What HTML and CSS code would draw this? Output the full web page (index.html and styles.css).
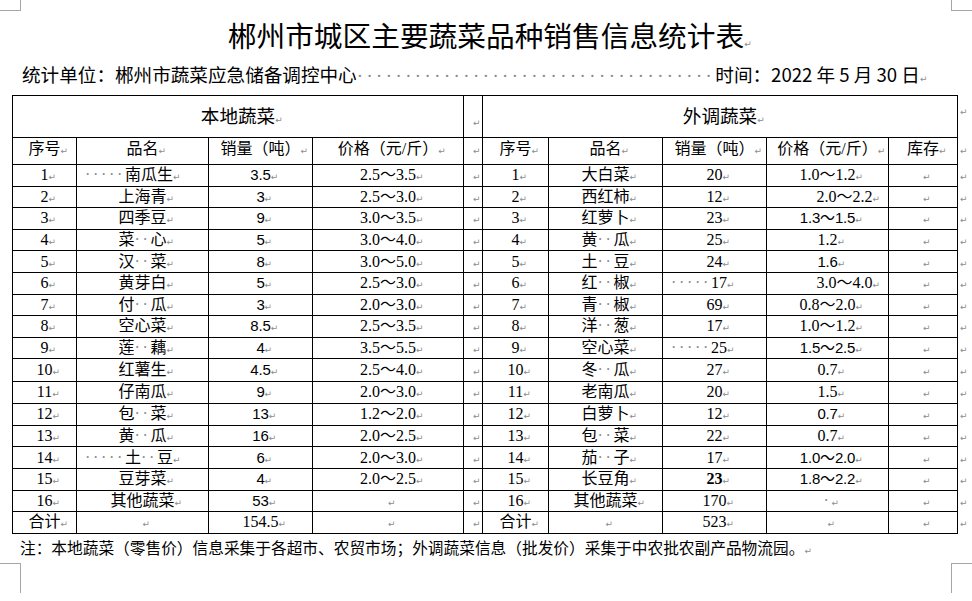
FILE: index.html
```html
<!DOCTYPE html>
<html lang="zh-CN">
<head>
<meta charset="utf-8">
<title>郴州市城区主要蔬菜品种销售信息统计表</title>
<link rel="stylesheet" href="styles.css">
</head>
<body>
<div class="page">
  <span class="corner tl"></span><span class="corner tr"></span><span class="corner bl"></span><span class="corner br"></span>
  <h1 class="title">郴州市城区主要蔬菜品种销售信息统计表</h1>
  <div class="sub"><span class="sub-l">统计单位：郴州市蔬菜应急储备调控中心</span><span class="fill">·····································</span><span class="sub-r">时间：2022 年 5 月 30 日</span></div>
  <table class="tbl">
    <colgroup>
      <col class="c1"><col class="c2"><col class="c3"><col class="c4"><col class="c5">
      <col class="c6"><col class="c7"><col class="c8"><col class="c9"><col class="c10"><col class="c11">
    </colgroup>
    <tr class="h1"><td colspan="4" class="big">本地蔬菜</td><td class="sepc"></td><td colspan="5" class="big">外调蔬菜</td><td class="end top"></td></tr>
    <tr class="h2"><td>序号</td><td>品名</td><td>销量（吨）</td><td>价格（元/斤）</td><td></td><td>序号</td><td>品名</td><td>销量（吨）</td><td>价格（元/斤）</td><td>库存</td><td class="end"></td></tr>
    <tr><td>1</td><td class="pl"><span class="d">·····</span>南瓜生</td><td class="ss">3.5</td><td>2.5～3.5</td><td></td><td>1</td><td>大白菜</td><td>20</td><td>1.0～1.2</td><td></td><td class="end"></td></tr>
    <tr><td>2</td><td>上海青</td><td class="ss">3</td><td>2.5～3.0</td><td></td><td>2</td><td>西红柿</td><td>12</td><td class="pr">2.0～2.2</td><td></td><td class="end"></td></tr>
    <tr><td>3</td><td>四季豆</td><td class="ss">9</td><td>3.0～3.5</td><td></td><td>3</td><td>红萝卜</td><td>23</td><td class="ss">1.3～1.5</td><td></td><td class="end"></td></tr>
    <tr><td>4</td><td>菜<span class="d">··</span>心</td><td class="ss">5</td><td>3.0～4.0</td><td></td><td>4</td><td>黄<span class="d">··</span>瓜</td><td>25</td><td>1.2</td><td></td><td class="end"></td></tr>
    <tr><td>5</td><td>汉<span class="d">··</span>菜</td><td class="ss">8</td><td>3.0～5.0</td><td></td><td>5</td><td>土<span class="d">··</span>豆</td><td>24</td><td class="ss">1.6</td><td></td><td class="end"></td></tr>
    <tr><td>6</td><td>黄芽白</td><td class="ss">5</td><td>2.5～3.0</td><td></td><td>6</td><td>红<span class="d">··</span>椒</td><td class="pq"><span class="d">·····</span>17</td><td class="pr">3.0～4.0</td><td></td><td class="end"></td></tr>
    <tr><td>7</td><td>付<span class="d">··</span>瓜</td><td class="ss">3</td><td>2.0～3.0</td><td></td><td>7</td><td>青<span class="d">··</span>椒</td><td>69</td><td>0.8～2.0</td><td></td><td class="end"></td></tr>
    <tr><td>8</td><td>空心菜</td><td class="ss">8.5</td><td>2.5～3.5</td><td></td><td>8</td><td>洋<span class="d">··</span>葱</td><td>17</td><td>1.0～1.2</td><td></td><td class="end"></td></tr>
    <tr><td>9</td><td>莲<span class="d">··</span>藕</td><td class="ss">4</td><td>3.5～5.5</td><td></td><td>9</td><td>空心菜</td><td class="pq"><span class="d">·····</span>25</td><td class="ss">1.5～2.5</td><td></td><td class="end"></td></tr>
    <tr class="tall"><td>10</td><td>红薯生</td><td class="ss">4.5</td><td>2.5～4.0</td><td></td><td>10</td><td>冬<span class="d">··</span>瓜</td><td>27</td><td>0.7</td><td></td><td class="end"></td></tr>
    <tr class="tall"><td>11</td><td>仔南瓜</td><td class="ss">9</td><td>2.0～3.0</td><td></td><td>11</td><td>老南瓜</td><td>20</td><td>1.5</td><td></td><td class="end"></td></tr>
    <tr><td>12</td><td>包<span class="d">··</span>菜</td><td class="ss">13</td><td>1.2～2.0</td><td></td><td>12</td><td>白萝卜</td><td>12</td><td class="ss">0.7</td><td></td><td class="end"></td></tr>
    <tr><td>13</td><td>黄<span class="d">··</span>瓜</td><td class="ss">16</td><td>2.0～2.5</td><td></td><td>13</td><td>包<span class="d">··</span>菜</td><td>22</td><td>0.7</td><td></td><td class="end"></td></tr>
    <tr><td>14</td><td class="pl"><span class="d">·····</span>土<span class="d">··</span>豆</td><td class="ss">6</td><td>2.0～3.0</td><td></td><td>14</td><td>茄<span class="d">··</span>子</td><td>17</td><td class="ss">1.0～2.0</td><td></td><td class="end"></td></tr>
    <tr><td>15</td><td>豆芽菜</td><td class="ss">4</td><td>2.0～2.5</td><td></td><td>15</td><td>长豆角</td><td><b>23</b></td><td class="ss">1.8～2.2</td><td></td><td class="end"></td></tr>
    <tr><td>16</td><td>其他蔬菜</td><td class="ss">53</td><td></td><td></td><td>16</td><td>其他蔬菜</td><td>170</td><td><span class="d">·</span></td><td></td><td class="end"></td></tr>
    <tr><td>合计</td><td></td><td>154.5</td><td></td><td></td><td>合计</td><td></td><td>523</td><td></td><td></td><td class="end"></td></tr>
  </table>
  <p class="note">注：本地蔬菜（零售价）信息采集于各超市、农贸市场；外调蔬菜信息（批发价）采集于中农批农副产品物流园。</p>
</div>
</body>
</html>
```

FILE: styles.css
```css
* { box-sizing: border-box; }
html, body { margin: 0; padding: 0; background: #fff; }
body {
  width: 972px;
  height: 601px;
  overflow: hidden;
  position: relative;
  font-family: "Noto Sans CJK SC", sans-serif;
  color: #000;
}
.page { padding-top: 14px; }

/* page crop marks */
.corner { position: absolute; width: 21px; border: 0 solid #a6a6a6; }
.corner.tl { left: 0; top: 0; height: 11px; border-right-width: 1px; border-bottom-width: 1px; }
.corner.tr { left: 951px; top: 0; height: 11px; border-left-width: 1px; border-bottom-width: 1px; }
.corner.bl { left: 0; top: 563px; height: 30px; border-right-width: 1px; border-top-width: 1px; }
.corner.br { left: 951px; top: 563px; height: 30px; border-left-width: 1px; border-top-width: 1px; }

/* paragraph marks */
.title::after, .sub::after, .note::after, .tbl td::after {
  content: "↵";
  display: inline-block;
  width: 0;
  font-family: "DejaVu Sans", sans-serif;
  font-size: 9px;
  line-height: 1;
  font-weight: normal;
  color: #8c8c8c;
  white-space: nowrap;
  letter-spacing: 0;
}

.title {
  margin: 0;
  height: 42px;
  font-size: 28.7px;
  font-weight: normal;
  line-height: 42px;
  text-align: center;
}

.sub {
  display: flex;
  align-items: baseline;
  margin: 6px 0 0 22px;
  width: 897px;
  height: 24px;
  font-size: 18.6px;
  line-height: 24px;
  font-weight: normal;
  white-space: nowrap;
}
.sub .fill {
  font-family: "Liberation Serif", serif;
  letter-spacing: 3.5px;
  color: #8a8a8a;
}
.sub .sub-r { margin-left: auto; }

.tbl {
  margin: 9px 0 0 12px;
  border-collapse: collapse;
  table-layout: fixed;
  width: 960px;
}
.c1 { width: 64px; }
.c2 { width: 132px; }
.c3 { width: 104px; }
.c4 { width: 151px; }
.c5 { width: 19px; }
.c6 { width: 66px; }
.c7 { width: 114px; }
.c8 { width: 104px; }
.c9 { width: 122px; }
.c10 { width: 69px; }
.c11 { width: 15px; }

.tbl tr { height: 21.6px; }
.tbl tr.tall { height: 22.4px; }
.tbl tr.h1 { height: 42px; }
.tbl tr.h2 { height: 27px; }

.tbl td {
  border: 1px solid #000;
  padding: 0;
  text-align: center;
  vertical-align: middle;
  white-space: nowrap;
  overflow: visible;
  font-family: "Liberation Serif", "Noto Sans CJK SC", serif;
  font-size: 16px;
  line-height: 16px;
  font-weight: normal;
}
.tbl tr.h2 td { padding-bottom: 4px; }
.tbl td.big { font-size: 18.6px; }
.tbl td.sepc { padding-top: 8px; }
.tbl td.end {
  border: none;
  text-align: left;
  padding-left: 2px;
}
.tbl td.end.top { vertical-align: top; padding-top: 6px; }

.tbl td.ss {
  font-family: "Liberation Sans", "Noto Sans CJK SC", sans-serif;
  font-weight: normal;
  font-size: 15px;
  letter-spacing: -0.2px;
}
.tbl td.pl { padding-right: 27px; }
.tbl td.pq { padding-right: 31px; }
.tbl td.pr { padding-left: 34px; }
.tbl td b { font-weight: bold; }

.d {
  font-family: "Liberation Serif", serif;
  letter-spacing: 2.7px;
  color: #8a8a8a;
}

.note {
  margin: 3px 0 0 20px;
  font-size: 15.7px;
  line-height: 22px;
  font-weight: normal;
  white-space: nowrap;
}
```
